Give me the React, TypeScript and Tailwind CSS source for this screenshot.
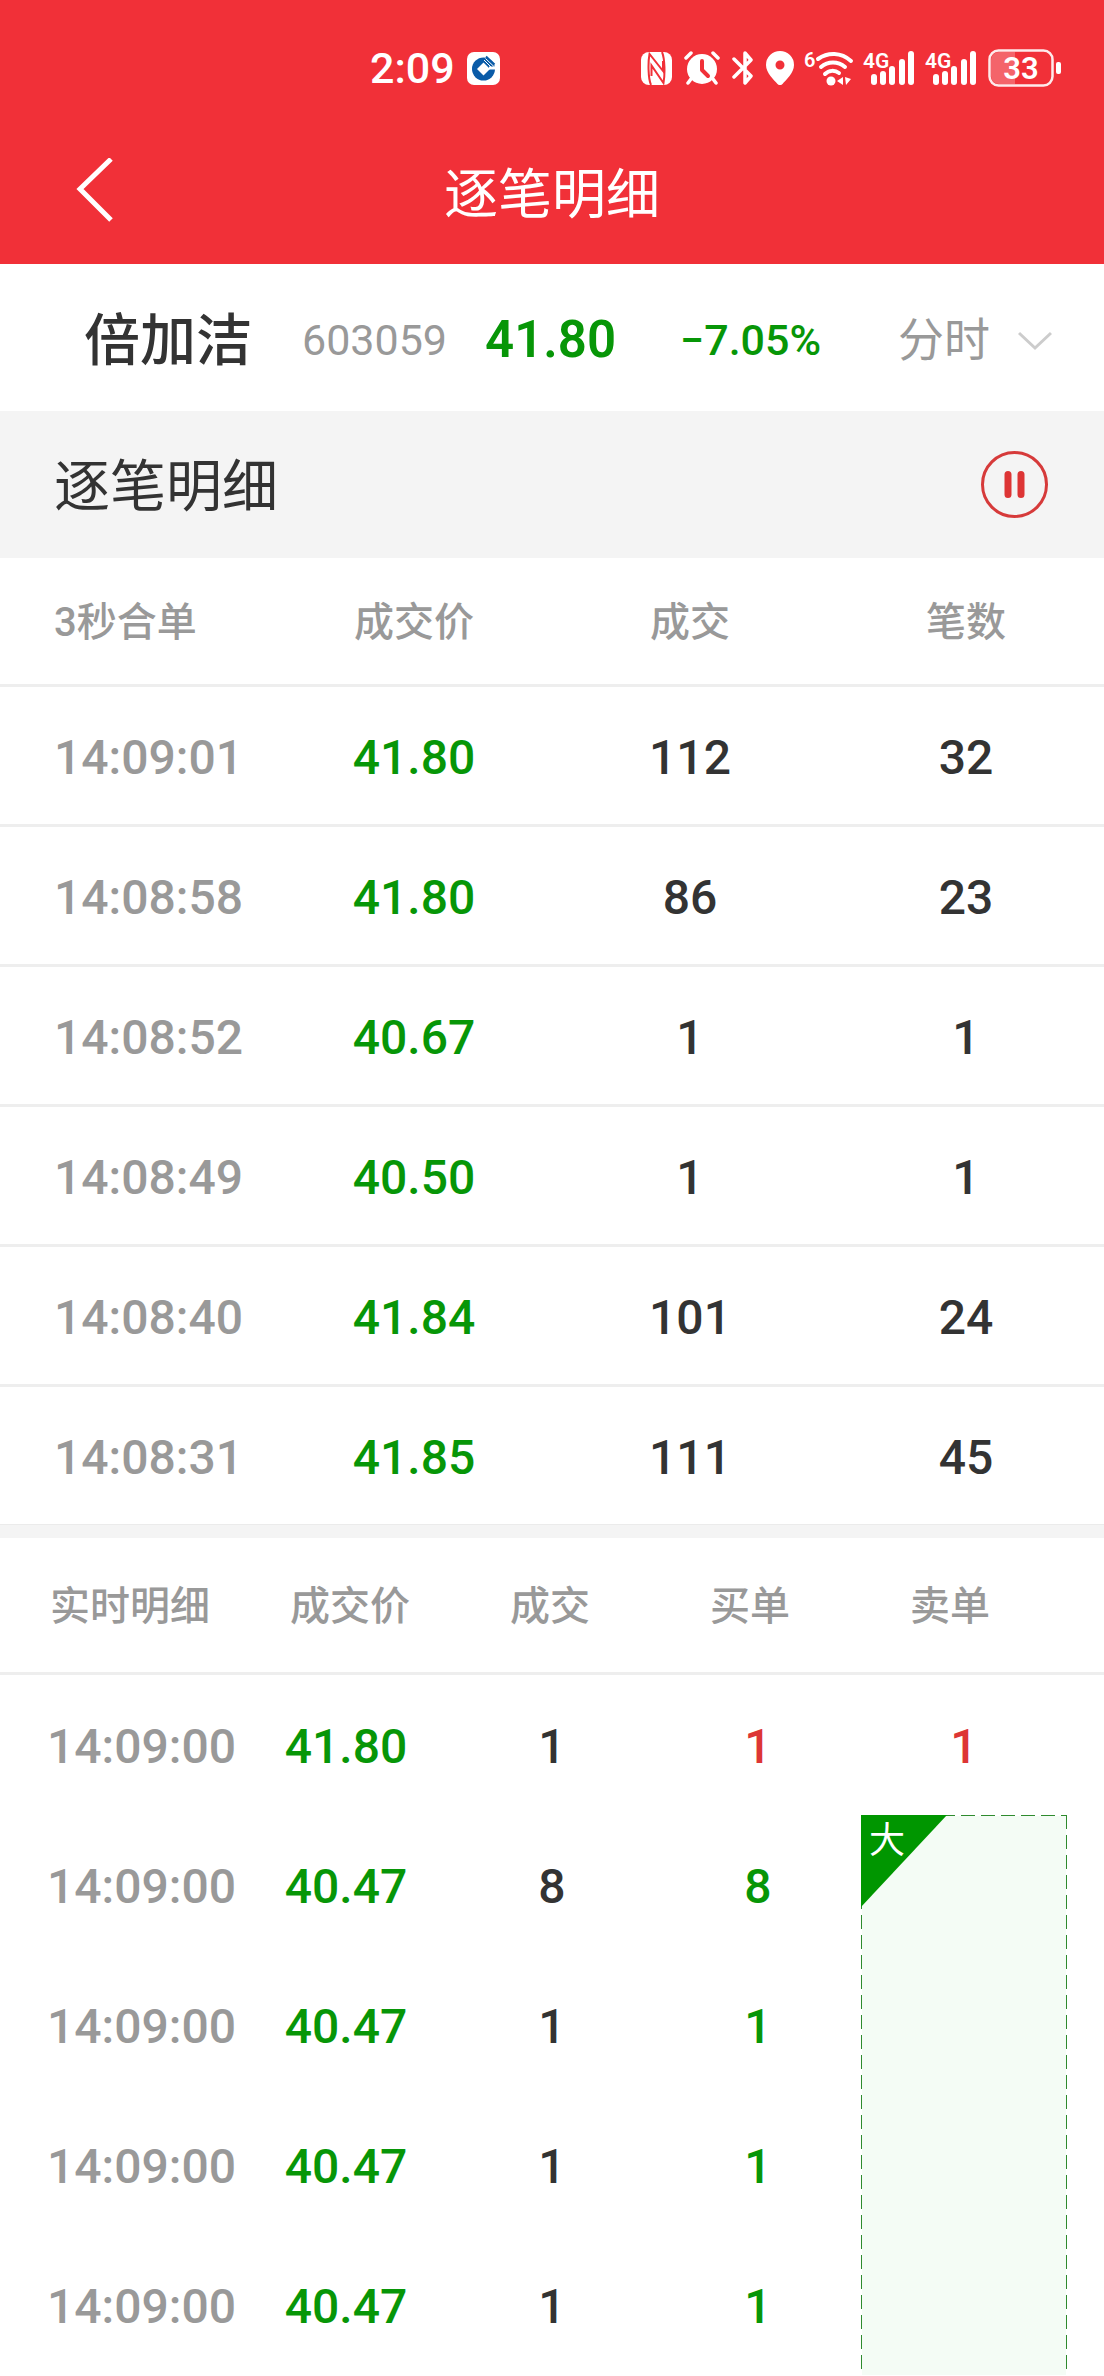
import { useState } from "react";

interface MergedTrade {
  time: string;
  price: string;
  volume: number;
  count: number;
}

interface LiveTrade {
  time: string;
  price: string;
  volume: number;
  buy: number;
  sell?: number;
  side: "up" | "down";
}

const mergedTrades: MergedTrade[] = [
  { time: "14:09:01", price: "41.80", volume: 112, count: 32 },
  { time: "14:08:58", price: "41.80", volume: 86, count: 23 },
  { time: "14:08:52", price: "40.67", volume: 1, count: 1 },
  { time: "14:08:49", price: "40.50", volume: 1, count: 1 },
  { time: "14:08:40", price: "41.84", volume: 101, count: 24 },
  { time: "14:08:31", price: "41.85", volume: 111, count: 45 },
];

const liveTrades: LiveTrade[] = [
  { time: "14:09:00", price: "41.80", volume: 1, buy: 1, sell: 1, side: "up" },
  { time: "14:09:00", price: "40.47", volume: 8, buy: 8, side: "down" },
  { time: "14:09:00", price: "40.47", volume: 1, buy: 1, side: "down" },
  { time: "14:09:00", price: "40.47", volume: 1, buy: 1, side: "down" },
  { time: "14:09:00", price: "40.47", volume: 1, buy: 1, side: "down" },
];

function SignalIcon() {
  return (
    <svg className="overflow-visible" width="50" height="36" viewBox="0 0 50 36" fill="currentColor">
      <text x="-1" y="18" fontSize="21" fontWeight="600" fontFamily="Roboto, sans-serif">4G</text>
      <rect x="7" y="24" width="6" height="11" rx="3" />
      <rect x="16" y="21" width="6" height="14" rx="3" />
      <rect x="25" y="16" width="6" height="19" rx="3" />
      <rect x="35" y="9" width="6" height="26" rx="3" />
      <rect x="44" y="1" width="6" height="34" rx="3" />
    </svg>
  );
}

function StatusBar() {
  return (
    <div className="flex h-[120px] items-center pt-4 pr-[43px] pl-[370px]">
      <span className="text-[43px] leading-none font-medium">2:09</span>
      <svg className="ml-3" width="33" height="33" viewBox="0 0 33 33">
        <rect width="33" height="33" rx="7" fill="#fff" />
        <circle cx="16.5" cy="17" r="11.5" fill="#0a5ba8" />
        <path d="M16.5 10.5 23 17l-6.5 6.5L10 17Z" fill="#fff" />
        <path d="M22 14.5h8v3h-8Z" fill="#fff" />
        <path d="M17 8 25 16M18.500 6.500 28 15.500" stroke="#fff" strokeWidth="1" />
        <path d="M19 4.500 27.500 12.500" stroke="#0a5ba8" strokeWidth="2" />
      </svg>

      <div className="ml-auto flex items-center gap-3">
        {/* NFC */}
        <svg width="31" height="33" viewBox="0 0 31 33" fill="none">
          <rect width="31" height="33" rx="8" fill="#fff" />
          <path d="M10 33C7 26 7 10 8.500 2L22 19V9" stroke="#f13038" strokeWidth="2" />
          <path d="M21 0c3 7 3 23 1.500 31L10.500 13.500V24" stroke="#f13038" strokeWidth="2" />
        </svg>
        {/* Alarm */}
        <svg width="36" height="34" viewBox="0 0 36 34" fill="none">
          <circle cx="18" cy="18" r="15" fill="#fff" />
          <path d="M2 7 7 2M34 7l-5-5M7 28l-3 4M29 28l3 4" stroke="#fff" strokeWidth="3.500" strokeLinecap="round" />
          <path d="M18 10v9l6 6" stroke="#f13038" strokeWidth="4" strokeLinecap="round" strokeLinejoin="round" />
        </svg>
        {/* Bluetooth */}
        <svg width="22" height="34" viewBox="0 0 22 34" fill="none" stroke="#fff" strokeWidth="3.500" strokeLinecap="round" strokeLinejoin="round">
          <path d="M2 8 19 25l-6 7V2l6 7L2 26" />
        </svg>
        {/* Location */}
        <svg width="28" height="34" viewBox="0 0 28 34">
          <path fillRule="evenodd" fill="#fff" d="M14 0a14 14 0 0 0-14 14c0 8 8 15 11.500 19a3.500 3.500 0 0 0 5 0C20 29 28 22 28 14A14 14 0 0 0 14 0Zm0 9.500a4.500 4.500 0 1 1 0 9 4.500 4.500 0 0 1 0-9Z" />
        </svg>
        {/* Wi-Fi 6 */}
        <svg className="overflow-visible" width="46" height="36" viewBox="0 0 46 36" fill="none">
          <text x="-2" y="17" fontSize="20" fontWeight="600" fill="#fff" fontFamily="Roboto, sans-serif">6</text>
          <path d="M12 9c10-7 23-7 33 2M15 17c7-6 17-6 24 0M19 24c4-4 10-4 14-1" stroke="#fff" strokeWidth="4" strokeLinecap="round" />
          <circle cx="25" cy="31" r="4.500" fill="#fff" />
          <path d="M37 27v8l-6-4ZM39 27l6 2-5 6Z" fill="#fff" />
        </svg>
        <SignalIcon />
        <SignalIcon />
        {/* Battery */}
        <svg width="73" height="38" viewBox="0 0 73 38">
          <path d="M11 3h16v32H11a8 8 0 0 1-8-8V11a8 8 0 0 1 8-8Z" fill="#fff" fillOpacity=".25" />
          <rect x="1.500" y="1.500" width="63" height="35" rx="9" fill="none" stroke="#fff" strokeOpacity=".9" strokeWidth="2.500" />
          <rect x="68" y="13" width="5" height="12" rx="2" fill="#fff" />
          <text x="33" y="30" textAnchor="middle" fontSize="31" fontWeight="600" fill="#fff" fontFamily="Roboto, sans-serif">33</text>
        </svg>
      </div>
    </div>
  );
}

function StockBar() {
  return (
    <section className="flex h-[147px] items-center bg-white pt-1.5 pr-[52px] pl-[84px]">
      <h2 className="text-[56px] font-medium text-[#333]">倍加洁</h2>
      <span className="ml-[50px] text-[43px] text-[#999]">603059</span>
      <span className="ml-[38px] text-[51px] font-semibold text-[#079607]">41.80</span>
      <span className="ml-16 text-[43px] font-medium text-[#079607]">−7.05%</span>
      <label className="ml-auto flex items-center gap-7">
        <select aria-label="周期" className="w-[92px] appearance-none bg-transparent text-[46px] text-[#999] outline-none">
          <option>分时</option>
        </select>
        <svg width="34" height="20" viewBox="0 0 34 20" fill="none" stroke="#ccc" strokeWidth="3">
          <path d="m1 2 16 15L33 2" />
        </svg>
      </label>
    </section>
  );
}

function MergedTable() {
  return (
    <table className="w-full table-fixed border-separate border-spacing-0 bg-white text-center text-[48px] font-medium">
      <thead>
        <tr className="h-[129px] text-[40px] text-[#999] *:border-b-3 *:border-[#eee] *:pt-1 *:font-medium">
          <th className="pl-[54px] text-left">3秒合单</th>
          <th>成交价</th>
          <th>成交</th>
          <th>笔数</th>
        </tr>
      </thead>
      <tbody>
        {mergedTrades.map((trade) => (
          <tr
            key={trade.time}
            className="h-[140px] *:border-b-3 *:border-[#eee] *:pt-1 last:h-[137px] last:*:border-b-0"
          >
            <td className="pl-[54px] text-left text-[#999]">{trade.time}</td>
            <td className="text-[#079607]">{trade.price}</td>
            <td className="text-[#333]">{trade.volume}</td>
            <td className="text-[#333]">{trade.count}</td>
          </tr>
        ))}
      </tbody>
    </table>
  );
}

const cell = "flex items-center justify-center pt-1";

function LiveTable() {
  const bigOrderRows = liveTrades.filter((t) => t.sell === undefined).length;
  const firstBigRow = liveTrades.findIndex((t) => t.sell === undefined);

  return (
    <table className="block w-full bg-white text-[48px] font-medium">
      <thead className="block">
        <tr className="grid h-[137px] grid-cols-5 items-center border-b-3 border-[#eee] pt-1 pr-[54px] pl-[50px] text-[40px] text-[#999] *:font-medium">
          <th className="text-left">实时明细</th>
          <th>成交价</th>
          <th>成交</th>
          <th>买单</th>
          <th>卖单</th>
        </tr>
      </thead>
      <tbody className="grid auto-rows-[140px] grid-cols-5 px-[37px]">
        {liveTrades.map((trade, i) => (
          <tr key={i} className="contents">
            <td className="flex items-center pt-1 pl-2.5 text-[#999]">{trade.time}</td>
            <td className={`${cell} text-[#079607]`}>{trade.price}</td>
            <td className={`${cell} text-[#333]`}>{trade.volume}</td>
            <td className={`${cell} ${trade.side === "up" ? "text-[#dd3535]" : "text-[#079607]"}`}>{trade.buy}</td>
            {trade.sell !== undefined && <td className={`${cell} text-[#dd3535]`}>{trade.sell}</td>}
            {/* One big sell order matched by all of the rows beside it */}
            {i === firstBigRow && (
              <td
                rowSpan={bigOrderRows}
                className="row-span-4 [background:repeating-linear-gradient(90deg,#2e8b2e_0_14px,#fff_14px_20px)_0_0/100%_1px_no-repeat,repeating-linear-gradient(#2e8b2e_0_14px,#fff_14px_20px)_0_0/1px_100%_no-repeat,repeating-linear-gradient(#2e8b2e_0_14px,#fff_14px_20px)_100%_0/1px_100%_no-repeat,#f4fcf5]"
              >
                <span className="block h-[92px] w-[86px] bg-[#009600] pt-2 pl-2 text-[36px] leading-none font-normal text-white [clip-path:polygon(0_0,100%_0,0_100%)]">
                  大
                </span>
              </td>
            )}
          </tr>
        ))}
      </tbody>
    </table>
  );
}

export default function App() {
  const [paused, setPaused] = useState(false);

  return (
    <div className="min-h-screen bg-white font-[Roboto,'Noto_Sans_CJK_SC',sans-serif]" lang="zh-CN">
      <header className="bg-[#f13038] text-white">
        <StatusBar />
        <div className="grid h-36 grid-cols-[1fr_auto_1fr] items-center">
          <button className="ml-[72px] w-12" aria-label="返回">
            <svg width="44" height="68" viewBox="0 0 44 68" fill="none" stroke="#fff" strokeWidth="5">
              <path d="M39 1 8 31l31 31" />
            </svg>
          </button>
          <h1 className="pt-2 text-[54px] leading-none">逐笔明细</h1>
        </div>
      </header>

      <StockBar />

      <div className="flex h-[147px] items-center justify-between bg-[#f4f4f4] pr-14 pl-[54px]">
        <h2 className="pt-1 text-[56px] text-[#333]">逐笔明细</h2>
        <button onClick={() => setPaused(!paused)} aria-label={paused ? "继续" : "暂停"}>
          <svg width="67" height="67" viewBox="0 0 67 67">
            <circle cx="33.500" cy="33.500" r="32" fill="none" stroke="#d63a3a" strokeWidth="3" />
            {paused ? (
              <path d="M26 20v27l21-13.500Z" fill="#dd3535" />
            ) : (
              <path d="M27 23.500v20M40 23.500v20" stroke="#dd3535" strokeWidth="7" strokeLinecap="round" />
            )}
          </svg>
        </button>
      </div>

      <MergedTable />
      <div className="h-3.5 border-t border-[#ebebeb] bg-[#f4f4f4]" />
      <LiveTable />
    </div>
  );
}
